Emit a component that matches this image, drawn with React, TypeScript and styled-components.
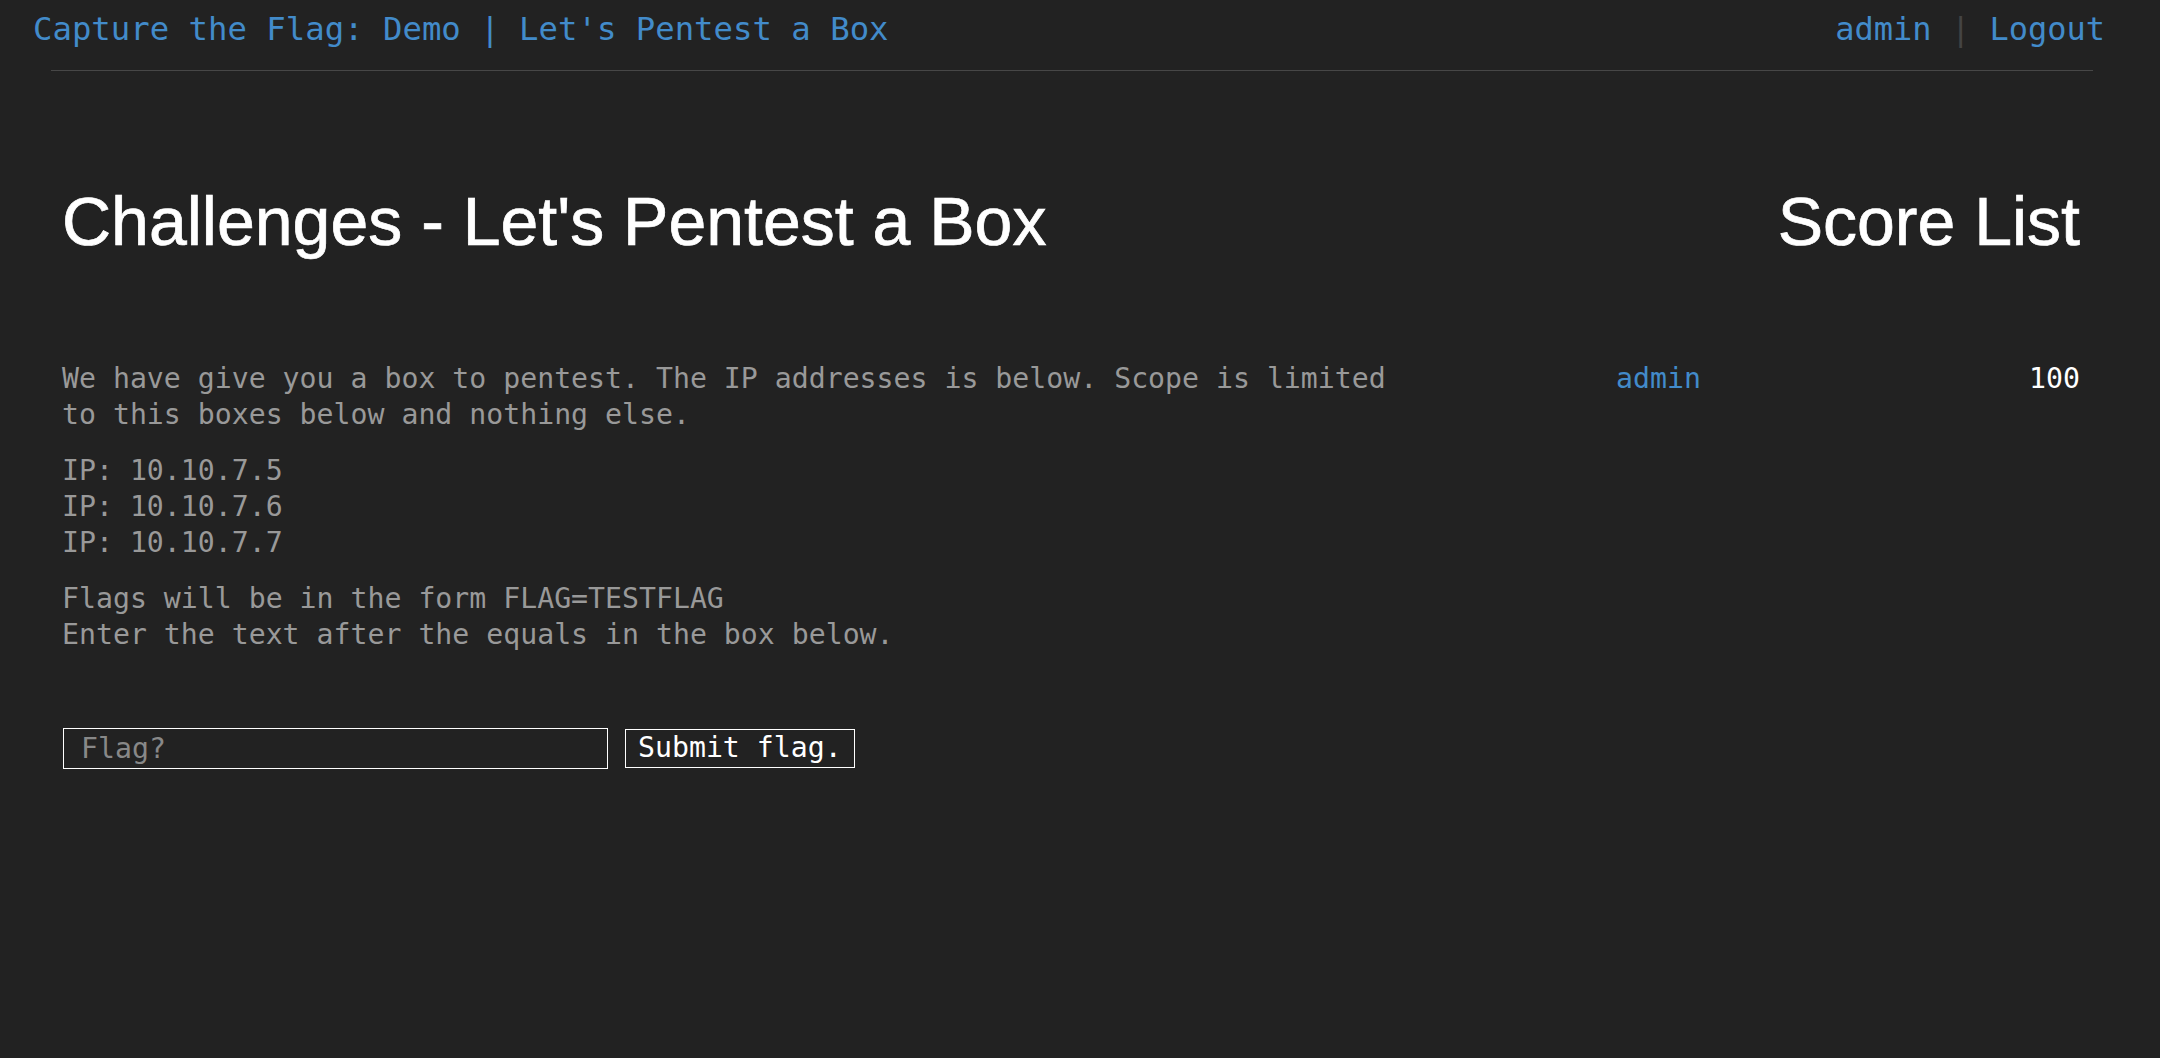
import React from 'react';
import styled, { createGlobalStyle } from 'styled-components';

const GlobalStyle = createGlobalStyle`
  html, body {
    margin: 0;
    padding: 0;
    background: #222222;
  }
  body {
    font-family: 'DejaVu Sans Mono', 'Liberation Mono', monospace;
  }
`;

const Page = styled.div`
  min-height: 1058px;
  background: #222222;
`;

const NavBar = styled.header`
  display: flex;
  justify-content: space-between;
  align-items: center;
  padding: 10px 55px 0 33px;
  font-size: 32.3px;
  line-height: 38px;
`;

const NavLink = styled.a`
  color: #428bca;
  text-decoration: none;
  white-space: pre;
`;

const NavRight = styled.div`
  display: flex;
  white-space: pre;
  font-size: 32px;
`;

const Separator = styled.span`
  color: #444444;
`;

const Divider = styled.hr`
  border: 0;
  height: 1px;
  background: #474747;
  margin: 22px 67px 0 51px;
`;

const Main = styled.main`
  display: grid;
  grid-template-columns: 1fr 464px;
  column-gap: 60px;
  padding: 114px 80px 0 62px;
`;

const Column = styled.section<{ $align?: 'left' | 'right' }>`
  display: flex;
  flex-direction: column;
  text-align: ${(p) => p.$align ?? 'left'};
`;

const Heading = styled.h1`
  margin: 0 0 104px;
  font-family: 'Liberation Sans', Arial, sans-serif;
  font-weight: 400;
  font-size: 68px;
  line-height: 72px;
  color: #ffffff;
  -webkit-text-stroke: 0.7px #ffffff;
`;

const Paragraph = styled.p`
  margin: 0 0 20px;
  font-size: 28.2px;
  line-height: 36px;
  color: #999999;
  max-width: 1340px;
`;

const FlagForm = styled.form`
  display: flex;
  align-items: center;
  gap: 17px;
  margin-top: 55px;
`;

const FlagInput = styled.input`
  box-sizing: border-box;
  width: 545px;
  height: 41px;
  margin-left: 1px;
  padding: 0 17px;
  border: 1px solid #ffffff;
  background: transparent;
  color: #ffffff;
  font-family: 'DejaVu Sans Mono', 'Liberation Mono', monospace;
  font-size: 28.2px;
  outline: none;

  &::placeholder {
    color: #888888;
  }
`;

const SubmitButton = styled.button`
  box-sizing: border-box;
  height: 39px;
  padding: 0 12px;
  border: 1px solid #ffffff;
  background: transparent;
  color: #ffffff;
  font-family: 'DejaVu Sans Mono', 'Liberation Mono', monospace;
  font-size: 28.2px;
  line-height: 1;
  cursor: pointer;
`;

const ScoreRow = styled.div`
  display: flex;
  justify-content: space-between;
  font-size: 28.2px;
  line-height: 36px;
`;

const ScoreName = styled.a`
  color: #428bca;
  text-decoration: none;
`;

const ScoreValue = styled.span`
  color: #ffffff;
`;

const ips = ['10.10.7.5', '10.10.7.6', '10.10.7.7'];
const scores = [{ name: 'admin', points: 100 }];

export default function App() {
  return (
    <Page>
      <GlobalStyle />
      <NavBar>
        <NavLink href="#">Capture the Flag: Demo | Let's Pentest a Box</NavLink>
        <NavRight>
          <NavLink href="#">admin</NavLink>
          <Separator> | </Separator>
          <NavLink href="#">Logout</NavLink>
        </NavRight>
      </NavBar>
      <Divider />
      <Main>
        <Column>
          <Heading>Challenges - Let's Pentest a Box</Heading>
          <Paragraph>
            We have give you a box to pentest. The IP addresses is below. Scope is limited to this boxes
            below and nothing else.
          </Paragraph>
          <Paragraph>
            {ips.map((ip) => (
              <React.Fragment key={ip}>
                IP: {ip}
                <br />
              </React.Fragment>
            ))}
          </Paragraph>
          <Paragraph>
            Flags will be in the form FLAG=TESTFLAG
            <br />
            Enter the text after the equals in the box below.
          </Paragraph>
          <FlagForm onSubmit={(e) => e.preventDefault()}>
            <FlagInput placeholder="Flag?" />
            <SubmitButton type="submit">Submit flag.</SubmitButton>
          </FlagForm>
        </Column>
        <Column $align="right">
          <Heading>Score List</Heading>
          {scores.map((s) => (
            <ScoreRow key={s.name}>
              <ScoreName href="#">{s.name}</ScoreName>
              <ScoreValue>{s.points}</ScoreValue>
            </ScoreRow>
          ))}
        </Column>
      </Main>
    </Page>
  );
}
